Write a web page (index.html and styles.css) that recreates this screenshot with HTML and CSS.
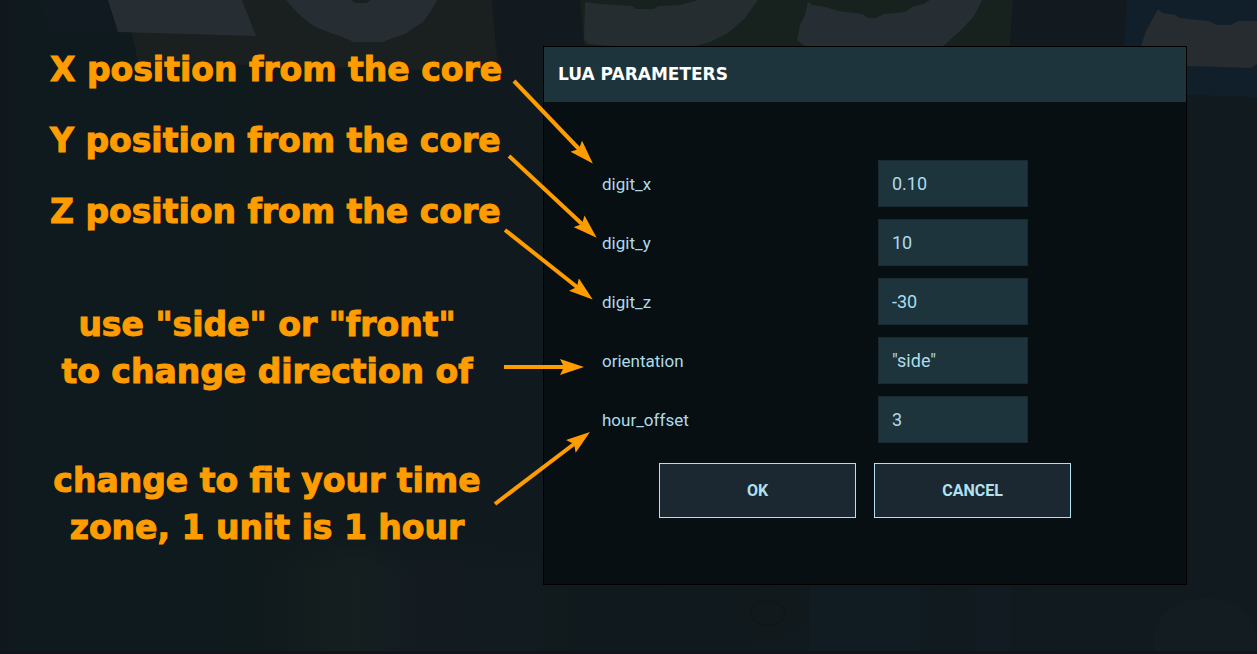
FILE: index.html
```html
<!DOCTYPE html>
<html lang="en">
<head>
<meta charset="utf-8">
<title>Lua Parameters</title>
<link rel="stylesheet" href="styles.css">
</head>
<body>
<svg class="scene" viewBox="0 0 1257 654" preserveAspectRatio="none" aria-hidden="true">
  <defs>
    <linearGradient id="base" x1="0" x2="1" y1="0" y2="0">
      <stop offset="0" stop-color="#11181d"/>
      <stop offset=".02" stop-color="#0f1a1f"/>
      <stop offset=".17" stop-color="#0f1a1f"/>
      <stop offset=".2" stop-color="#101a1c"/>
      <stop offset=".3" stop-color="#101a1e"/>
      <stop offset="1" stop-color="#111b1f"/>
    </linearGradient>
    <linearGradient id="pillar" x1="0" x2="1" y1="0" y2="0">
      <stop offset="0" stop-color="#101a1c"/>
      <stop offset=".3" stop-color="#151f20"/>
      <stop offset=".5" stop-color="#131b21"/>
      <stop offset="1" stop-color="#111b1e"/>
    </linearGradient>
    <linearGradient id="fade" x1="0" x2="0" y1="0" y2="1">
      <stop offset="0" stop-color="#fff" stop-opacity="0"/>
      <stop offset=".3" stop-color="#fff"/>
    </linearGradient>
    <mask id="pillar-mask"><rect x="260" y="535" width="310" height="119" fill="url(#fade)"/></mask>
  </defs>
  <rect width="1257" height="654" fill="url(#base)"/>
  <path d="M40 0H110L132 36 50 30Z" fill="#111a20"/>
  <path d="M125 0H492L499 72 420 70 138 62Z" fill="#1a1f1f"/>
  <path d="M492 0H580L584 46H543V80H499Z" fill="#121a20"/>
  <path d="M580 0H1013L1010 46H584Z" fill="#17221f"/>
  <path d="M1013 0H1127L1124 46H1010Z" fill="#131a1f"/>
  <path d="M1127 0H1257V97L1187 95V46H1124Z" fill="#111f2b"/>
  <path d="M108 0H242L256 36 118 32Z" fill="#262e33"/>
  <path d="M286 0Q304 22 320 29L342 37 354 42H382L405 34 423 22 431 11 437 0H371L366 3H355L351 0Z" fill="#262e33"/>
  <path d="M585 2L600 4 632 6 636 9H654L658 6 680 5 698 0H758L745 18 728 33 710 42 696 46H610L588 44 584 39Z" fill="#262d30"/>
  <path d="M808 2L812 5 826 7 838 11 862 14 868 18H876L884 14 905 12 914 6 924 4 930 0H982L974 16 962 29 951 39 943 46H805L797 40 800 25 805 15Z" fill="#262e33"/>
  <path d="M1158 9L1162 13 1175 15 1180 18 1208 21 1218 25H1231L1238 21H1257V64L1251 68 1187 66V46H1141L1146 31 1152 20Z" fill="#262c2f"/>
  <rect x="260" y="535" width="310" height="119" fill="url(#pillar)" mask="url(#pillar-mask)"/>
  <rect x="810" y="585" width="110" height="69" fill="#101c21"/>
  <ellipse cx="768" cy="613" rx="34" ry="22" fill="#11191c"/>
  <ellipse cx="768" cy="613" rx="17" ry="12" fill="none" stroke="#10171a" stroke-width="2"/>
  <rect x="975" y="585" width="36" height="69" fill="#111b21"/>
  <ellipse cx="1205" cy="640" rx="52" ry="42" fill="#121c21"/>
  <rect y="651" width="1257" height="3" fill="#11151a"/>
</svg>
<main class="stage">
  <section class="notes" aria-label="Parameter notes">
    <p class="note">X position from the core</p>
    <p class="note">Y position from the core</p>
    <p class="note">Z position from the core</p>
    <p class="note note-group">use "side" or "front"<br>to change direction of</p>
    <p class="note note-group">change to fit your time<br>zone, 1 unit is 1 hour</p>
  </section>
  <form class="dialog" aria-labelledby="dialog-title">
    <header class="dialog-header"><h1 class="dialog-title" id="dialog-title">LUA PARAMETERS</h1></header>
    <div class="dialog-body">
      <div class="fields">
        <div class="field"><label for="digit-x">digit_x</label><input id="digit-x" type="text" value="0.10"></div>
        <div class="field"><label for="digit-y">digit_y</label><input id="digit-y" type="text" value="10"></div>
        <div class="field"><label for="digit-z">digit_z</label><input id="digit-z" type="text" value="-30"></div>
        <div class="field"><label for="orientation">orientation</label><input id="orientation" type="text" value='"side"'></div>
        <div class="field"><label for="hour-offset">hour_offset</label><input id="hour-offset" type="text" value="3"></div>
      </div>
      <div class="actions">
        <button class="button" type="button">OK</button>
        <button class="button" type="button">CANCEL</button>
      </div>
    </div>
  </form>
</main>
<svg class="arrows" viewBox="0 0 1257 654" preserveAspectRatio="none" aria-hidden="true">
  <defs>
    <marker id="head" markerUnits="userSpaceOnUse" markerWidth="24" markerHeight="16" refX="4" refY="8" orient="auto">
      <path d="M0 0L24 8 0 16 4 8Z" fill="#ff9c00"/>
    </marker>
  </defs>
  <g stroke="#ff9c00" stroke-width="4" marker-end="url(#head)">
    <path d="M514 81L579 149"/>
    <path d="M509 156L582 224"/>
    <path d="M505 230L577 287"/>
    <path d="M504 367L564 367"/>
    <path d="M495 504L574 444"/>
  </g>
</svg>
</body>
</html>
```

FILE: styles.css
```css
* {
  box-sizing: border-box;
}

body {
  margin: 0;
  min-height: 100vh;
  position: relative;
  overflow-x: hidden;
  background: #101a1e;
  font-family: Roboto, "Noto Sans", sans-serif;
  color: #aedbea;
}

.scene,
.arrows {
  position: absolute;
  inset: 0;
  width: 100%;
  height: 654px;
}

.arrows {
  pointer-events: none;
}

.stage {
  position: relative;
  display: grid;
  grid-template-columns: 543fr 644fr;
  align-items: start;
  padding: 46px 70px 69px 0;
}

.notes {
  display: flex;
  flex-direction: column;
  align-items: flex-start;
  gap: 24px;
  padding-left: 50px;
}

.note {
  margin: 0;
  color: #ff9c00;
  font: bold 33px/47px "DejaVu Sans", sans-serif;
  white-space: nowrap;
  -webkit-text-stroke: 1px #ff9c00;
}

.note-group {
  width: 434px;
  margin-top: 42px;
  text-align: center;
}

.note-group + .note-group {
  margin-top: 38px;
}

.dialog {
  border: 1px solid #000;
  background: #070f12;
}

.dialog-header {
  padding: 16px 14px;
  background: #1e343c;
}

.dialog-title {
  margin: 0;
  color: #fff;
  font: bold 17px/23px "DejaVu Sans", sans-serif;
}

.dialog-body {
  padding: 58px 58px 66px;
}

.fields {
  display: grid;
  gap: 12px;
}

.field {
  display: grid;
  grid-template-columns: 276fr 250fr;
  align-items: center;
  font-size: 17px;
}

.field input {
  width: 150px;
  height: 47px;
  padding: 0 13px;
  border: 1px solid #1b2a32;
  border-radius: 0;
  background: #1e343c;
  color: #aedbea;
  font: 18px Roboto, sans-serif;
}

.actions {
  display: flex;
  justify-content: center;
  gap: 18px;
  margin-top: 20px;
}

.button {
  width: 197px;
  height: 55px;
  border: 1px solid #b2e0ef;
  background: #1b2831;
  color: #b2e0ef;
  font: bold 16px Roboto, sans-serif;
}
```
